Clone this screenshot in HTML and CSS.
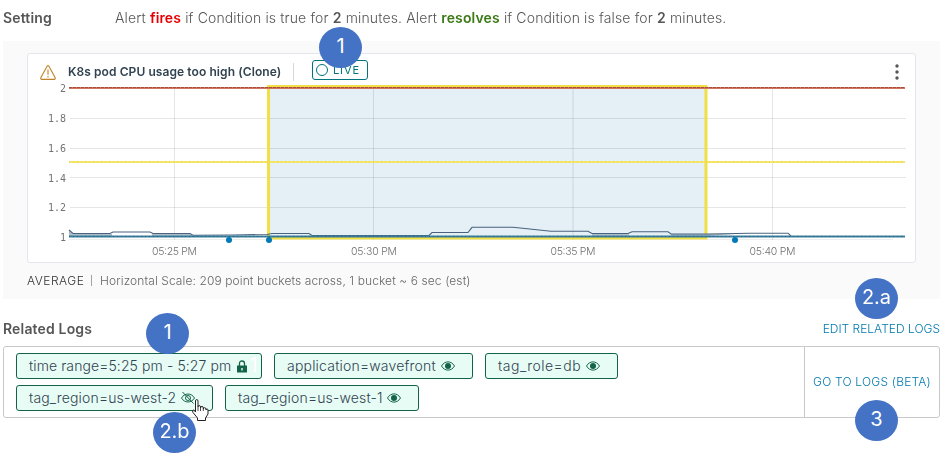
FILE: index.html
```html
<!DOCTYPE html>
<html lang="en">
<head>
<meta charset="utf-8">
<title>Alert details</title>
<link rel="stylesheet" href="styles.css">
</head>
<body>
<svg class="defs" width="0" height="0">
  <symbol id="eye" viewBox="0 0 14 10"><path d="M.5 5C3.600 -.5 10.400 -.5 13.500 5C10.400 10.500 3.600 10.500 .5 5Z" fill="none" stroke="currentColor"/><circle cx="7" cy="5" r="3" fill="currentColor"/></symbol>
</svg>
<main class="page">
  <section class="setting">
    <h2 class="label">Setting</h2>
    <p class="condition">Alert <b class="fires">fires</b> if Condition is true for <b>2</b> minutes. Alert <b class="resolves">resolves</b> if Condition is false for <b>2</b> minutes.</p>
  </section>

  <section class="panel">
    <div class="card">
      <header class="card-head">
        <svg class="warn" width="16" height="15" viewBox="0 0 16 15"><path d="M7.100 1.200Q8 .1 8.900 1.200L15.200 12.700Q15.500 14.300 14.300 14.400H1.700Q.5 14.300 .8 12.700Z"/><path d="M8 4.500V9.700M8 11V12.500"/></svg>
        <h3 class="card-title">K8s pod CPU usage too high (Clone)</h3>
        <span class="divider"></span>
        <span class="live"><i class="ring"></i><span>LIVE</span><span class="badge badge-live">1</span></span>
        <svg class="kebab" width="4" height="16" viewBox="0 0 4 16"><circle cx="2" cy="2" r="1.700"/><circle cx="2" cy="8" r="1.700"/><circle cx="2" cy="14" r="1.700"/></svg>
      </header>
      <svg class="chart" width="887" height="178" viewBox="28 84 887 178">
        <rect x="268" y="86" width="438" height="152" fill="#e4eff6"/>
        <g class="grid">
          <path d="M70 118.500H906M70 148.500H906M70 177.500H906M70 207.500H906"/>
          <path d="M174.500 87V240M373.500 87V240M573 87V240M772.500 87V240"/>
          <path class="axis" d="M69 239.500H893"/>
        </g>
        <path d="M69 162H905" stroke="#f5e66e" stroke-width="2"/>
        <path d="M69 162H905" stroke="#eedb52" stroke-width="2" stroke-dasharray="1 3"/>
        <rect class="range" x="268.500" y="86.500" width="437.500" height="151.500"/>
        <path d="M69 88H905" stroke="#cf7560" stroke-width="2"/>
        <path d="M69 87.500H905" stroke="#aa4b3b" stroke-dasharray="3 1"/>
        <path class="fill" d="M69 230L73 234H112V236H69ZM152 234H190L193 236H152ZM592 234H629V236H592ZM671 234H735L708 236H671Z"/>
        <path class="series" d="M69 230L73 233.500H110L113 232H150L153 233.500H190L193 235.300L232 235L267 234.500L272 233.500H309L312 235.500H429L432 232.500H468L472 227.300H513L551 231.300H588L592 233.500H628L632 231.700H668L671 234H708L750 233.200H788L791 236"/>
        <path d="M69 236.500H905" stroke="#397f9f" stroke-width="2"/>
        <path d="M69 236.500H905" stroke="#345e76" stroke-dasharray="1 3"/>
        <g fill="#0079b8"><circle cx="229" cy="240" r="3"/><circle cx="269" cy="240" r="3"/><circle cx="735" cy="240" r="3"/></g>
        <g class="y-labels"><text x="66" y="92">2</text><text x="66" y="121.500">1.8</text><text x="66" y="151.500">1.6</text><text x="66" y="181.500">1.4</text><text x="66" y="210.500">1.2</text><text x="66" y="240.500">1</text></g>
        <g class="x-labels"><text x="152" y="255" textLength="45">05:25 PM</text><text x="351" y="255" textLength="46">05:30 PM</text><text x="550.500" y="255" textLength="45">05:35 PM</text><text x="749.500" y="255" textLength="46">05:40 PM</text></g>
      </svg>
    </div>
    <p class="summary"><span class="average">AVERAGE</span><span class="pipe"></span><span class="scale">Horizontal Scale: 209 point buckets across, 1 bucket ~ 6 sec (est)</span></p>
  </section>

  <section class="related">
    <header class="related-head">
      <h2 class="label">Related Logs</h2>
      <a class="link edit">EDIT RELATED LOGS</a>
      <span class="badge badge-range">1</span>
      <span class="badge badge-edit">2.a</span>
    </header>
    <div class="logs">
      <div class="chips">
        <span class="chip chip-time"><span class="chip-text">time range=5:25 pm - 5:27 pm</span><svg class="lock" width="10" height="13" viewBox="0 0 10 13"><path d="M2.500 6V3.500Q2.500 1 5 1T7.500 3.500V6" fill="none" stroke="currentColor" stroke-width="1.300"/><path d="M0 5.500H10V12Q10 12.500 9.500 12.500H.5Q0 12.500 0 12Z" fill="currentColor"/><path d="M5 8V10.500" stroke="#e7fcf5" stroke-width="1.400"/></svg><span class="ghost">1</span></span>
        <span class="chip chip-app"><span class="chip-text">application=wavefront</span><svg class="eye" width="14" height="10"><use href="#eye"/></svg></span>
        <span class="chip chip-role"><span class="chip-text">tag_role=db</span><svg class="eye" width="14" height="10"><use href="#eye"/></svg></span>
        <span class="chip chip-west2"><span class="chip-text">tag_region=us-west-2</span><svg class="eye-off" width="14" height="12" viewBox="0 0 14 12"><path d="M.5 6C3.600 .7 10.400 .7 13.500 6C10.400 11.300 3.600 11.300 .5 6Z"/><circle cx="7" cy="6" r="2.500"/><path d="M1.500 0L12.500 11.500"/></svg>
          <svg class="pointer" width="17" height="22" viewBox="0 0 17 22"><path d="M3.500 13V2Q3.500 .5 4.700 .5T6 2V8Q6 6.500 7.200 6.500T8.500 8V9Q8.500 7.500 10 7.500T11.300 9V10Q11.300 8.700 12.600 8.700T14 10V11Q14 10 15 10T16 11V15L13.500 19V21.500H5.500V19L1 13.500Q0 11.500 1 11T3.500 13Z" fill="#fff" stroke="#222"/><path d="M6 8V12M8.500 9V12M11.300 10V12" stroke="#222" stroke-width=".8"/></svg>
          <span class="badge badge-hide">2.b</span></span>
        <span class="chip chip-west1"><span class="chip-text">tag_region=us-west-1</span><svg class="eye" width="14" height="10"><use href="#eye"/></svg></span>
      </div>
      <div class="go"><a class="link">GO TO LOGS (BETA)</a><span class="badge badge-go">3</span></div>
    </div>
  </section>
</main>
</body>
</html>
```

FILE: styles.css
```css
* { box-sizing: border-box; }
body { margin: 0; background: #fff; color: #565656; font-family: Inter, "Liberation Sans", sans-serif; }
h2, h3, p { margin: 0; }
.defs { position: absolute; }
.page { width: 946px; height: 464px; padding: 0 6px 0 3px; overflow: hidden; }

.setting { display: flex; align-items: center; height: 41px; padding-bottom: 5px; }
.label { width: 112px; font-size: 14px; line-height: 20px; font-weight: 600; letter-spacing: .16px; white-space: nowrap; }
.condition { font-size: 14px; font-weight: 300; line-height: 20px; letter-spacing: .14px; white-space: nowrap; }
.condition b { font-weight: 600; }
.condition .fires { color: #e60000; }
.condition .resolves { color: #3c7a16; }

.panel { width: 937px; height: 258px; padding: 12px 24px 0; background: #fafafa; }
.card { width: 889px; height: 210px; border: 1px solid #e3e6ef; border-radius: 3px; background: #fff; }
.card-head { display: flex; align-items: center; height: 30px; padding: 6px 16px 0 12px; }
.warn { fill: none; stroke: #c08327; stroke-width: 1.1; }
.card-title { width: 225px; margin-left: 12px; color: #314351; font-size: 12px; font-weight: 600; line-height: 18px; letter-spacing: .08px; white-space: nowrap; }
.divider { width: 1px; height: 18px; background: #d7d7d7; }
.live { position: relative; display: flex; align-items: center; gap: 5px; width: 56px; height: 20px; margin: -4px 0 0 18px; padding-left: 3px; border: 1px solid #00757d; border-radius: 3px; color: #00757d; font-size: 11px; line-height: 16px; letter-spacing: .9px; }
.live > span:not(.badge) { margin-top: -1px; }
.ring { width: 12px; height: 12px; border: 1px solid #00757d; border-radius: 50%; }
.kebab { margin-left: auto; fill: #565656; }
.chart { display: block; overflow: visible; }
.grid { fill: none; stroke: #e5e6e7; }
.grid path { mix-blend-mode: multiply; }
.grid .axis { stroke: #eee; }
.range { fill: none; stroke: #f0df45; stroke-width: 3; }
.fill { fill: #aebdc8; }
.series { fill: none; stroke: #49637e; stroke-width: 1.1; }
.y-labels { fill: #747474; font: 10px "DejaVu Sans Mono", monospace; text-anchor: end; }
.x-labels { fill: #707070; font-size: 10.5px; font-weight: 300; }

.summary { display: flex; align-items: center; height: 35px; font-size: 12px; font-weight: 300; white-space: nowrap; }
.average { width: 64px; color: #333; letter-spacing: .5px; }
.pipe { width: 1px; height: 11px; margin-right: 8px; background: #a3a3a3; }
.scale { color: #666; letter-spacing: .1px; }

.related-head { position: relative; display: flex; justify-content: space-between; height: 47px; padding-top: 20px; }
.link { color: #0079ad; font-size: 12px; font-weight: 300; line-height: 20px; white-space: nowrap; }
.logs { display: flex; width: 937px; height: 72px; border: 1px solid #c9c9c9; border-radius: 3px; }
.chips { display: flex; flex: 1; flex-wrap: wrap; align-content: flex-start; gap: 6px 12px; padding: 6px 12px; }
.chip { position: relative; display: flex; align-items: center; justify-content: space-between; height: 26px; padding: 0 17px 0 12px; border: 1px solid #136349; border-radius: 3px; background: #e7fcf5; color: #314351; font-size: 14px; font-weight: 300; letter-spacing: .16px; white-space: nowrap; }
.chip-text { line-height: 20px; margin-top: -1px; }
.chip-time { width: 246px; padding-right: 14px; letter-spacing: .1px; }
.chip-app { width: 199px; letter-spacing: .2px; }
.chip-role { width: 133px; letter-spacing: .5px; }
.chip-west2 { width: 197px; }
.chip-west1 { width: 194px; }
.lock, .eye, .eye-off { color: #136349; }
.eye-off { fill: none; stroke: #136349; }
.ghost { position: absolute; right: 3px; top: -1px; color: #fff; font-size: 20px; line-height: 24px; font-weight: 400; }
.pointer { position: absolute; left: 175px; top: 13px; z-index: 3; }
.go { position: relative; display: flex; align-items: center; justify-content: center; width: 135px; border-left: 1px solid #c9c9c9; }
.go .link { letter-spacing: .2px; }

.badge { position: absolute; z-index: 2; display: flex; align-items: center; justify-content: center; width: 43px; height: 41px; padding-bottom: 4px; border-radius: 50%; background: #4472c4; color: #fff; font: 20px Inter, sans-serif; letter-spacing: 0; }
.badge-live { left: 6px; top: -34px; }
.badge-range { left: 143px; top: 14px; }
.badge-edit { left: 852px; top: -21px; }
.badge-hide { left: 136px; top: 26px; }
.badge-go { left: 50px; top: 53px; }
```
